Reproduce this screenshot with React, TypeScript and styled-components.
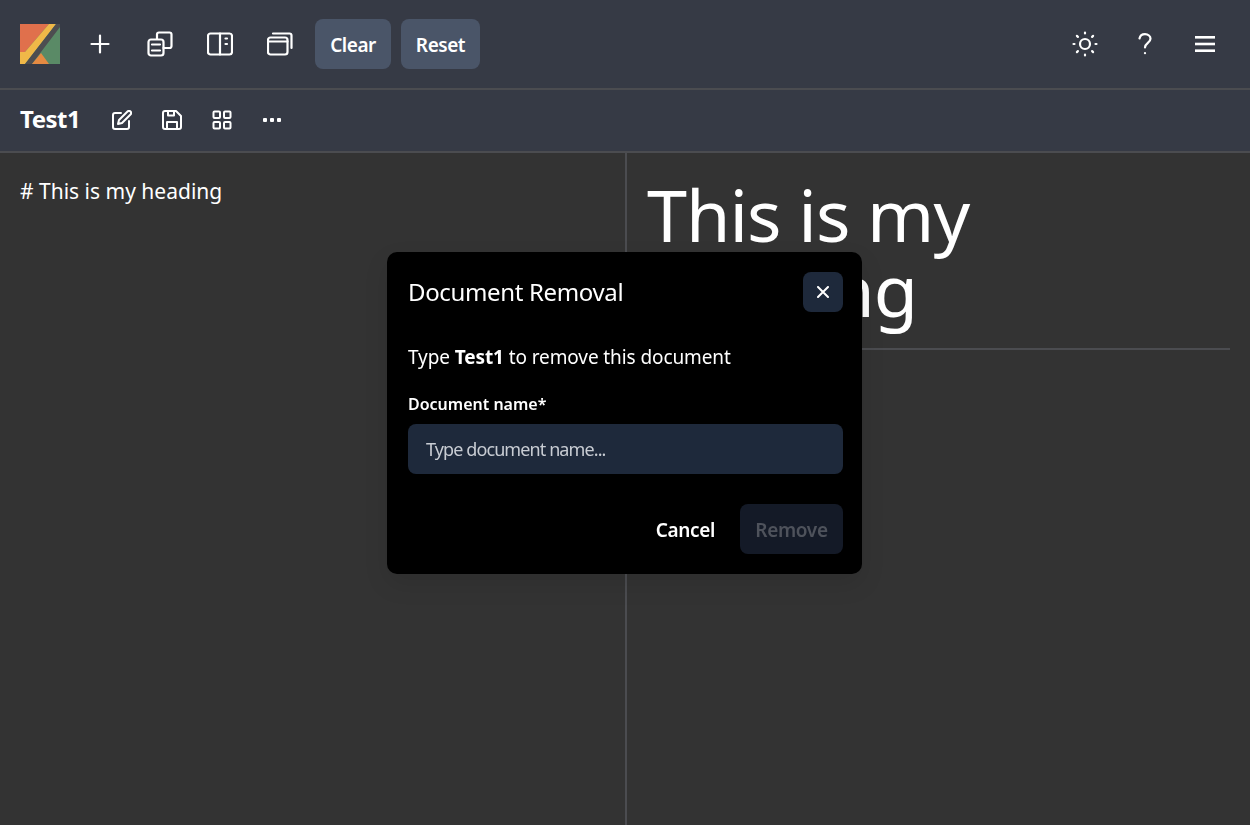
import React from "react";
import styled, { createGlobalStyle } from "styled-components";

const Global = createGlobalStyle`
  html, body { margin: 0; padding: 0; height: 100%; background: #333333; overflow: hidden; }
  #root { height: 100%; }
  * { box-sizing: border-box; }
  body { font-family: "Noto Sans", "Open Sans", sans-serif; color: #fff; }
`;

const Page = styled.div`
  height: 825px;
  display: flex;
  flex-direction: column;
`;
const Header = styled.header`
  height: 90px;
  flex: none;
  display: flex;
  align-items: center;
  padding: 0 20px;
  background: #363a45;
  border-bottom: 2px solid #4b4c50;
`;
const Group = styled.div<{ $gap: number }>`
  display: flex;
  align-items: center;
  gap: ${(p) => p.$gap}px;
`;
const Spacer = styled.div`
  flex: 1;
`;
const Logo = styled.svg`
  width: 40px;
  height: 40px;
  margin-right: 15px;
  flex: none;
`;
const IconButton = styled.button<{ $size: number }>`
  width: ${(p) => p.$size}px;
  height: ${(p) => p.$size}px;
  display: flex;
  align-items: center;
  justify-content: center;
  background: none;
  border: 0;
  padding: 0;
  color: #fff;
`;
const TextButton = styled.button<{ $w: number }>`
  width: ${(p) => p.$w}px;
  height: 50px;
  border: 0;
  border-radius: 8px;
  padding: 2px 0 0;
  background: #4a5568;
  color: #fff;
  font: 600 19px "Noto Sans", sans-serif;
  letter-spacing: -0.45px;
`;
const Toolbar = styled.div`
  height: 63px;
  flex: none;
  display: flex;
  align-items: center;
  padding: 0 20px 1px;
  background: #363a45;
  border-bottom: 2px solid #4b4c50;
`;
const DocTitle = styled.h2`
  margin: -2px 22px 0 0;
  font-size: 24px;
  line-height: 32px;
  font-weight: 700;
  letter-spacing: -0.5px;
`;
const Panes = styled.main`
  flex: 1;
  display: grid;
  grid-template-columns: 625px 1fr;
`;
const Editor = styled.section`
  padding: 24px 20px;
  border-right: 2px solid #4b4c50;
  width: 627px;
  font-size: 21px;
  line-height: 28px;
`;
const Preview = styled.section`
  padding: 24px 20px 0 22px;
`;
const Heading = styled.h1`
  margin: 0;
  font-size: 72px;
  line-height: 75px;
  font-weight: 400;
  letter-spacing: -1px;
  padding-bottom: 21px;
  border-bottom: 2px solid #4b4c50;
`;
const Overlay = styled.div`
  position: fixed;
  inset: 0;
  display: flex;
  justify-content: flex-start;
  align-items: flex-start;
  padding: 252px 0 0 387px;
  pointer-events: none;
`;
const Modal = styled.div`
  width: 475px;
  height: 322px;
  background: #000;
  border-radius: 10px;
  padding: 20px 19px 20px 21px;
  box-shadow: 0 10px 25px rgba(0, 0, 0, 0.1);
`;
const ModalHead = styled.div`
  display: flex;
  align-items: center;
  justify-content: space-between;
  height: 40px;
`;
const ModalTitle = styled.h3`
  margin: 0;
  font-size: 24px;
  font-weight: 400;
  line-height: 40px;
  letter-spacing: -0.35px;
`;
const Close = styled.button`
  width: 40px;
  height: 40px;
  border: 0;
  padding: 0;
  border-radius: 8px;
  background: #1e293b;
  color: #fff;
  display: flex;
  align-items: center;
  justify-content: center;
`;
const Prompt = styled.p`
  margin: 32px 0 0;
  font-size: 19px;
  line-height: 26px;
  letter-spacing: -0.1px;
  b {
    font-weight: 700;
  }
`;
const Label = styled.label`
  display: block;
  margin-top: 22px;
  font-size: 16px;
  line-height: 24px;
  font-weight: 600;
`;
const Input = styled.input`
  display: block;
  width: 100%;
  height: 50px;
  margin-top: 8px;
  padding: 0 18px;
  border: 0;
  border-radius: 8px;
  background: #1e293b;
  color: #fff;
  font: 400 18px "Noto Sans", sans-serif;
  letter-spacing: -0.9px;
  &::placeholder {
    color: #c8ccd3;
    opacity: 1;
  }
`;
const Actions = styled.div`
  display: flex;
  justify-content: flex-end;
  align-items: center;
  margin-top: 30px;
  gap: 25px;
`;
const Cancel = styled.button`
  background: none;
  border: 0;
  padding: 2px 0 0;
  color: #fff;
  font: 600 19px "Noto Sans", sans-serif;
  letter-spacing: -0.35px;
`;
const Remove = styled.button`
  width: 103px;
  height: 50px;
  border: 0;
  border-radius: 8px;
  padding: 2px 0 0;
  background: #141a27;
  color: #4e525b;
  font: 600 19px "Noto Sans", sans-serif;
  letter-spacing: -0.35px;
`;

const S = { fill: "none", stroke: "currentColor", strokeWidth: 2, strokeLinecap: "round" as const, strokeLinejoin: "round" as const };

export default function App() {
  return (
    <Page>
      <Global />
      <Header>
        <Logo viewBox="0 0 40 40">
          <rect width="40" height="40" fill="#5a8a66" />
          <polygon points="0,0 29,0 5,28 0,28" fill="#e0704c" />
          <polygon points="29,0 36,0 5,40 0,40 0,28 5,28" fill="#f0b848" />
          <polygon points="36,0 40,0 40,3 21,28 12,40 5,40" fill="#4d4d50" />
          <polygon points="12,40 21,29 29,40" fill="#e58a42" />
        </Logo>
        <Group $gap={10}>
          <IconButton $size={50} aria-label="New">
            <svg width="20" height="20" viewBox="0 0 20 20" {...S} strokeWidth={2.2}>
              <path d="M10 1.5v17M1.5 10h17" />
            </svg>
          </IconButton>
          <IconButton $size={50} aria-label="Duplicate">
            <svg width="26" height="26" viewBox="0 0 26 26" {...S} strokeWidth={2.2}>
              <path d="M10 8V3.5a2 2 0 0 1 2-2h10.5a2 2 0 0 1 2 2V15a2 2 0 0 1-2 2h-6" />
              <rect x="1.5" y="8.5" width="15" height="16" rx="2.5" />
              <path d="M5 13.5h8M5 19.5h8" />
            </svg>
          </IconButton>
          <IconButton $size={50} aria-label="Split view">
            <svg width="26" height="24" viewBox="0 0 26 24" {...S} strokeWidth={2.2}>
              <rect x="1" y="1.5" width="24" height="21" rx="2.5" />
              <path d="M13 1.5v21M18.5 6.5h1.5M18.5 12h1.5" />
            </svg>
          </IconButton>
          <IconButton $size={50} aria-label="Windows">
            <svg width="26" height="24" viewBox="0 0 26 24" {...S} strokeWidth={2.2}>
              <rect x="1" y="5.5" width="19.5" height="17" rx="2.5" />
              <path d="M1 9.5h19.5M6 1.5h16.5a2 2 0 0 1 2 2v12.5" />
            </svg>
          </IconButton>
          <TextButton $w={76}>Clear</TextButton>
          <TextButton $w={79}>Reset</TextButton>
        </Group>
        <Spacer />
        <Group $gap={10}>
          <IconButton $size={50} aria-label="Theme">
            <svg width="26" height="26" viewBox="0 0 26 26" {...S} strokeWidth={2.2}>
              <circle cx="13" cy="13" r="5" />
              <path d="M13 1.5v1M13 23.5v1M1.5 13h1M23.5 13h1M4.9 4.9l1 1M20.1 20.1l1 1M4.9 21.1l1-1M20.1 5.9l1-1" />
            </svg>
          </IconButton>
          <IconButton $size={50} aria-label="Help">
            <svg width="14" height="22" viewBox="0 0 14 22" {...S} strokeWidth={2.2}>
              <path d="M1.5 5.5C2 3 4 1.2 7 1.2c3.2 0 5.5 2 5.5 4.6 0 4-5.5 4.3-5.5 8.7" />
              <path d="M7 20v.2" />
            </svg>
          </IconButton>
          <IconButton $size={50} aria-label="Menu">
            <svg width="20" height="16" viewBox="0 0 20 16" fill="currentColor">
              <rect y="0" width="20" height="2.6" />
              <rect y="6.7" width="20" height="2.6" />
              <rect y="13.4" width="20" height="2.6" />
            </svg>
          </IconButton>
        </Group>
      </Header>
      <Toolbar>
        <DocTitle>Test1</DocTitle>
        <Group $gap={10}>
          <IconButton $size={40} aria-label="Rename">
            <svg width="20" height="20" viewBox="0 0 20 20" {...S}>
              <path d="M9 3H3a2 2 0 0 0-2 2v12a2 2 0 0 0 2 2h12a2 2 0 0 0 2-2v-6" />
              <path d="M15.5 1.5a2 2 0 0 1 3 3L10 13l-4 1 1-4z" />
            </svg>
          </IconButton>
          <IconButton $size={40} aria-label="Save">
            <svg width="20" height="20" viewBox="0 0 20 20" {...S}>
              <path d="M3 1h11l5 5v11a2 2 0 0 1-2 2H3a2 2 0 0 1-2-2V3a2 2 0 0 1 2-2z" />
              <path d="M5 19v-7h10v7M6 1v4.5h6V1" />
            </svg>
          </IconButton>
          <IconButton $size={40} aria-label="Templates">
            <svg width="20" height="20" viewBox="0 0 20 20" {...S}>
              <rect x="1.5" y="1.5" width="6.5" height="6.5" rx="1" />
              <rect x="12" y="1.5" width="6.5" height="6.5" rx="1" />
              <rect x="1.5" y="12" width="6.5" height="6.5" rx="1" />
              <rect x="12" y="12" width="6.5" height="6.5" rx="1" />
            </svg>
          </IconButton>
          <IconButton $size={40} aria-label="More">
            <svg width="18" height="4" viewBox="0 0 18 4" fill="currentColor">
              <rect x="0" y="0" width="4" height="4" rx="1" />
              <rect x="7" y="0" width="4" height="4" rx="1" />
              <rect x="14" y="0" width="4" height="4" rx="1" />
            </svg>
          </IconButton>
        </Group>
      </Toolbar>
      <Panes>
        <Editor># This is my heading</Editor>
        <Preview>
          <Heading>
            This is my
            <br />
            heading
          </Heading>
        </Preview>
      </Panes>
      <Overlay>
        <Modal>
          <ModalHead>
            <ModalTitle>Document Removal</ModalTitle>
            <Close aria-label="Close">
              <svg width="12" height="12" viewBox="0 0 12 12" fill="none" stroke="currentColor" strokeWidth="2" strokeLinecap="round">
                <path d="M1 1l10 10M11 1L1 11" />
              </svg>
            </Close>
          </ModalHead>
          <Prompt>
            Type <b>Test1</b> to remove this document
          </Prompt>
          <Label>Document name*</Label>
          <Input placeholder="Type document name..." />
          <Actions>
            <Cancel>Cancel</Cancel>
            <Remove>Remove</Remove>
          </Actions>
        </Modal>
      </Overlay>
    </Page>
  );
}
